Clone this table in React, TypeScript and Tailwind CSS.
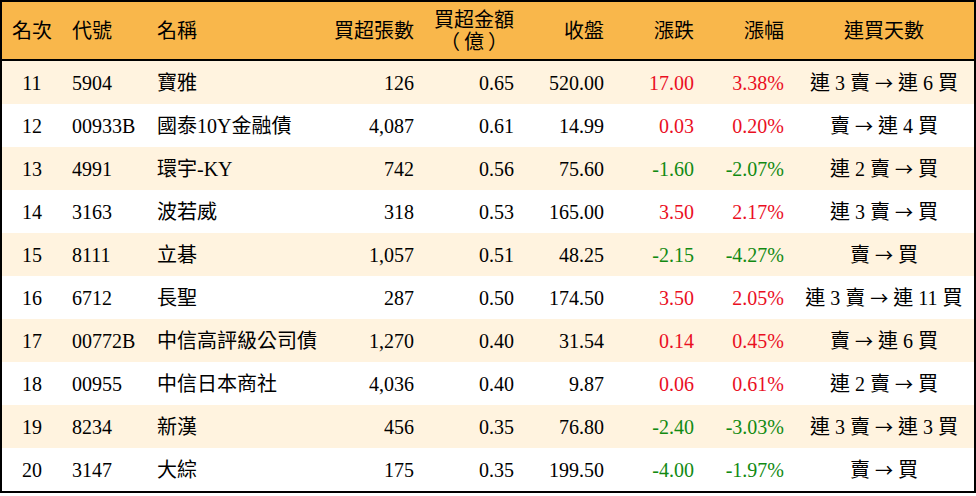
import React from "react";

type Row = {
  rank: string;
  code: string;
  name: string;
  vol: string;
  amt: string;
  close: string;
  chg: string;
  pct: string;
  from: string;
  to: string;
  up: boolean;
};

const rows: Row[] = [
  { rank: "11", code: "5904", name: "寶雅", vol: "126", amt: "0.65", close: "520.00", chg: "17.00", pct: "3.38%", from: "連 3 賣", to: "連 6 買", up: true },
  { rank: "12", code: "00933B", name: "國泰10Y金融債", vol: "4,087", amt: "0.61", close: "14.99", chg: "0.03", pct: "0.20%", from: "賣", to: "連 4 買", up: true },
  { rank: "13", code: "4991", name: "環宇-KY", vol: "742", amt: "0.56", close: "75.60", chg: "-1.60", pct: "-2.07%", from: "連 2 賣", to: "買", up: false },
  { rank: "14", code: "3163", name: "波若威", vol: "318", amt: "0.53", close: "165.00", chg: "3.50", pct: "2.17%", from: "連 3 賣", to: "買", up: true },
  { rank: "15", code: "8111", name: "立碁", vol: "1,057", amt: "0.51", close: "48.25", chg: "-2.15", pct: "-4.27%", from: "賣", to: "買", up: false },
  { rank: "16", code: "6712", name: "長聖", vol: "287", amt: "0.50", close: "174.50", chg: "3.50", pct: "2.05%", from: "連 3 賣", to: "連 11 買", up: true },
  { rank: "17", code: "00772B", name: "中信高評級公司債", vol: "1,270", amt: "0.40", close: "31.54", chg: "0.14", pct: "0.45%", from: "賣", to: "連 6 買", up: true },
  { rank: "18", code: "00955", name: "中信日本商社", vol: "4,036", amt: "0.40", close: "9.87", chg: "0.06", pct: "0.61%", from: "連 2 賣", to: "買", up: true },
  { rank: "19", code: "8234", name: "新漢", vol: "456", amt: "0.35", close: "76.80", chg: "-2.40", pct: "-3.03%", from: "連 3 賣", to: "連 3 買", up: false },
  { rank: "20", code: "3147", name: "大綜", vol: "175", amt: "0.35", close: "199.50", chg: "-4.00", pct: "-1.97%", from: "賣", to: "買", up: false },
];

const cols = "grid grid-cols-[60px_83px_185px_94px_100px_90px_90px_90px_180px]";

export default function App() {
  return (
    <div
      className="w-[976px] h-[496px] bg-white text-black"
      style={{ fontFamily: '"Liberation Serif", "Noto Sans CJK TC", serif' }}
    >
      <div className="border-2 border-black text-[20px]">
        <div className={`${cols} h-[59px] bg-[#f9b74b] border-b-2 border-black items-center leading-[22px]`}>
          <div className="text-center">名次</div>
          <div className="pl-[10px]">代號</div>
          <div className="pl-[12px]">名稱</div>
          <div className="text-right pr-[10px]">買超張數</div>
          <div className="text-right pr-[10px]">
            <span className="inline-block text-center">
              買超金額
              <br />
              <span>（</span>
              <span className="px-[4px]">億</span>
              <span>）</span>
            </span>
          </div>
          <div className="text-right pr-[10px]">收盤</div>
          <div className="text-right pr-[10px]">漲跌</div>
          <div className="text-right pr-[10px]">漲幅</div>
          <div className="text-center">連買天數</div>
        </div>
        {rows.map((r, i) => {
          const color = r.up ? "text-[#ea0f1f]" : "text-[#128a12]";
          return (
            <div
              key={r.rank}
              className={`${cols} h-[43px] items-center ${i % 2 === 0 ? "bg-[#fff3df]" : "bg-white"}`}
            >
              <div className="text-center">{r.rank}</div>
              <div className="pl-[10px]">{r.code}</div>
              <div className="pl-[12px] whitespace-nowrap">{r.name}</div>
              <div className="text-right pr-[10px]">{r.vol}</div>
              <div className="text-right pr-[10px]">{r.amt}</div>
              <div className="text-right pr-[10px]">{r.close}</div>
              <div className={`text-right pr-[10px] ${color}`}>{r.chg}</div>
              <div className={`text-right pr-[10px] ${color}`}>{r.pct}</div>
              <div className="text-center whitespace-pre">
                {r.from}{" "}
                <span className="text-[18px]" style={{ fontFamily: '"Noto Sans CJK TC", sans-serif' }}>→</span>{" "}
                {r.to}
              </div>
            </div>
          );
        })}
      </div>
    </div>
  );
}
